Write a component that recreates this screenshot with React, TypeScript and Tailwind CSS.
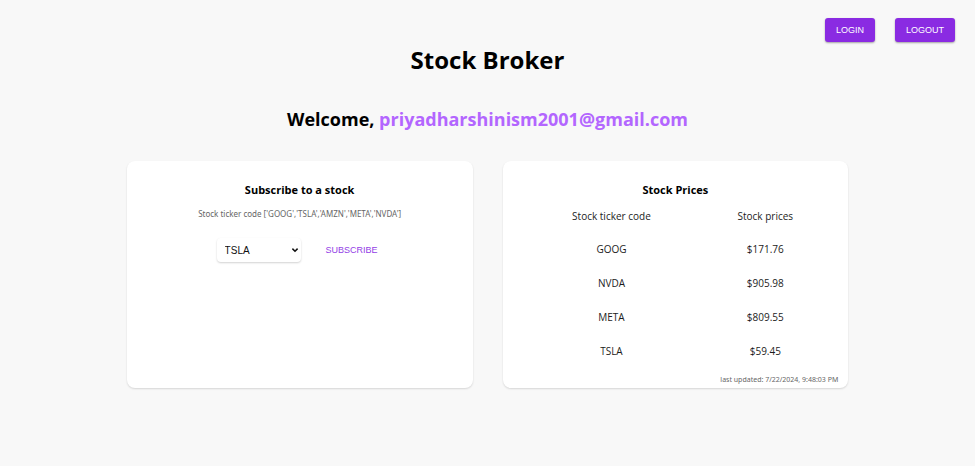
import { useState } from "react";

const tickers = ["GOOG", "TSLA", "AMZN", "META", "NVDA"];

const prices = [
  { code: "GOOG", price: "$171.76" },
  { code: "NVDA", price: "$905.98" },
  { code: "META", price: "$809.55" },
  { code: "TSLA", price: "$59.45" },
];

const primaryButton =
  "h-6 cursor-pointer rounded-[3px] bg-[#8a2be2] px-[11px] font-['Liberation_Sans',Arial,sans-serif] text-[9px] leading-6 text-white shadow-[0_1px_2px_rgba(0,0,0,0.35)]";

const card =
  "flex min-w-0 flex-1 flex-col rounded-lg bg-white pt-4 shadow-[0_1px_2px_rgba(0,0,0,0.14)]";

export default function App() {
  const [ticker, setTicker] = useState("TSLA");

  return (
    <div className="min-h-screen bg-[#f8f8f8] pb-8 font-['Open_Sans','Noto_Sans',sans-serif] text-black">
      <nav className="flex justify-end gap-5 px-5 pt-[18px]">
        <button type="button" className={primaryButton}>LOGIN</button>
        <button type="button" className={primaryButton}>LOGOUT</button>
      </nav>

      <h1 className="text-center text-[24px] leading-9 font-bold">Stock Broker</h1>
      <h2 className="mt-[26px] text-center text-[18px] leading-[30px] font-bold">
        Welcome, <span className="text-[#b366ff]">priyadharshinism2001@gmail.com</span>
      </h2>

      <main className="mx-auto mt-[27px] flex w-[74%] gap-[30px]">
        <section className={card}>
          <h3 className="text-center text-[11px] leading-[26px] font-bold">Subscribe to a stock</h3>
          <label htmlFor="ticker" className="mt-[3px] text-center font-['Noto_Sans',sans-serif] text-[8px] leading-4 text-[#666]">
            Stock ticker code ['GOOG','TSLA','AMZN','META','NVDA']
          </label>
          <form className="mt-4 flex items-start justify-center gap-5" onSubmit={(e) => e.preventDefault()}>
            <div className="relative">
              <select
                id="ticker"
                value={ticker}
                onChange={(e) => setTicker(e.target.value)}
                className="block h-6 w-[84px] appearance-none rounded bg-white px-2 font-['Liberation_Sans',Arial,sans-serif] text-[10px] text-[#111] shadow-[0_1px_2px_rgba(0,0,0,0.18)]"
              >
                {tickers.map((t) => (
                  <option key={t}>{t}</option>
                ))}
              </select>
              <svg
                viewBox="0 0 8 6"
                className="pointer-events-none absolute top-[9px] right-[2px] h-1.5 w-2"
                fill="none"
                stroke="#111"
                strokeWidth="1.5"
                aria-hidden="true"
              >
                <path d="M1.4 1.6 4 4.2 6.6 1.6" />
              </svg>
            </div>
            <button
              type="submit"
              className="h-6 cursor-pointer px-[5px] font-['Liberation_Sans',Arial,sans-serif] text-[9px] leading-6 text-[#9340e6]"
            >
              SUBSCRIBE
            </button>
          </form>
        </section>

        <section className={card}>
          <h3 className="text-center text-[11px] leading-[26px] font-bold">Stock Prices</h3>
          <div className="pr-1.5 pl-8">
            <table className="w-full table-fixed text-center text-[10px] leading-4 text-[#1c1c1c]">
              <thead>
                <tr className="h-[29px]">
                  <th scope="col" className="pb-1 font-normal">Stock ticker code</th>
                  <th scope="col" className="pb-1 font-normal">Stock prices</th>
                </tr>
              </thead>
              <tbody>
                {prices.map((row) => (
                  <tr key={row.code} className="h-[34px]">
                    <td>{row.code}</td>
                    <td>{row.price}</td>
                  </tr>
                ))}
              </tbody>
            </table>
          </div>
          <p className="mt-1 pr-2.5 text-right font-['Noto_Sans',sans-serif] text-[7px] leading-4 text-[#666]">
            last updated: 7/22/2024, 9:48:03 PM
          </p>
        </section>
      </main>
    </div>
  );
}
